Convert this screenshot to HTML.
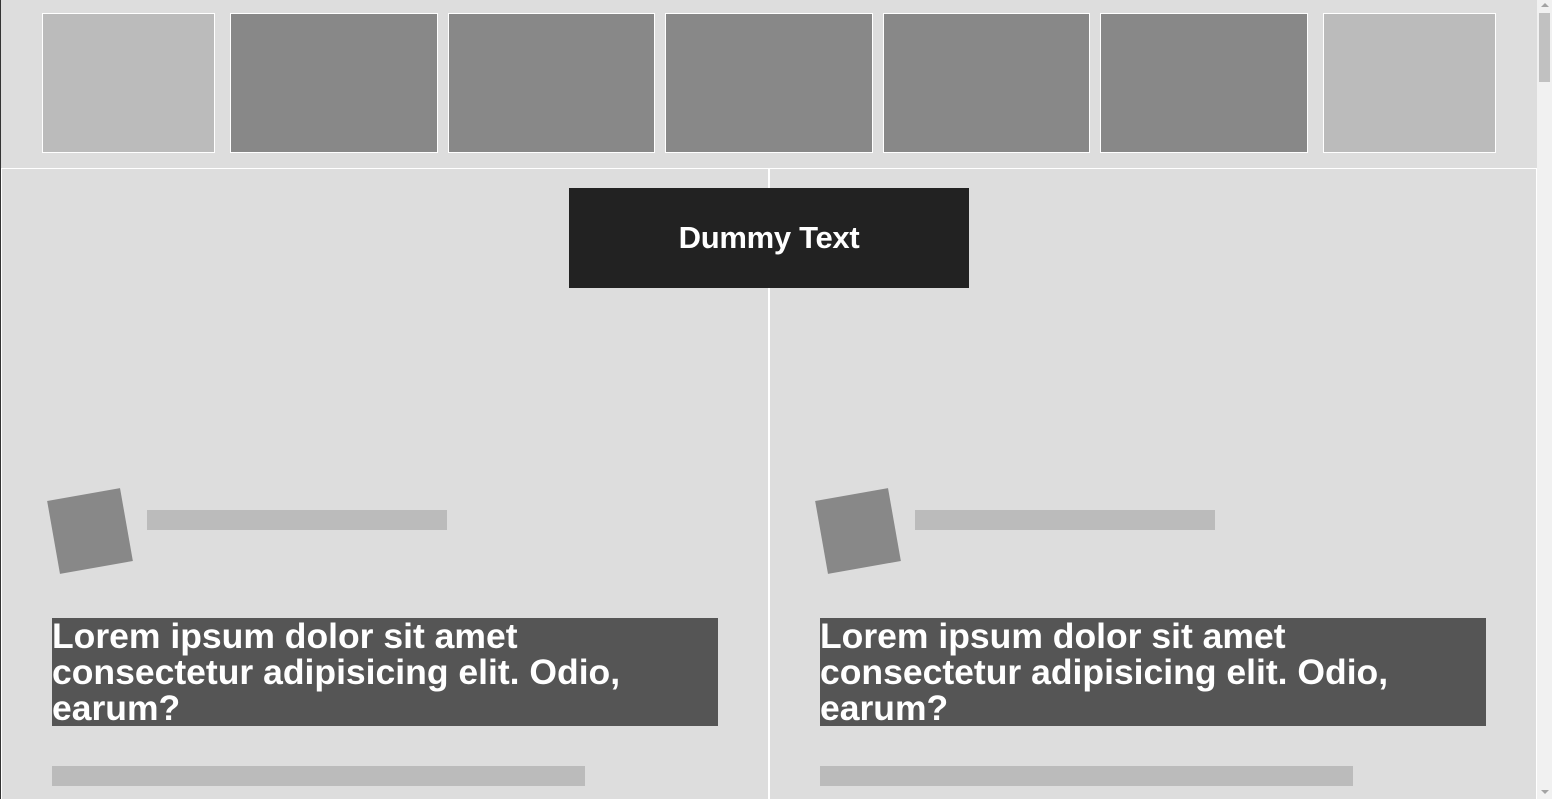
<!DOCTYPE html>
<html><head><style>
*{margin:0;padding:0;box-sizing:border-box}
body{width:1552px;height:799px;overflow:hidden;background:#ddd;position:relative;font-family:"Liberation Sans",sans-serif}
.a{position:absolute}
.t{border:1px solid #fff;top:13px;height:140px}
.l{background:#bbb}.d{background:#888}
.h{color:#fff;background:#555;font-weight:bold;font-size:35.5px;line-height:36px;width:666px;height:108px;top:618px;white-space:nowrap}
.sq{width:74px;height:74px;background:#888;transform:rotate(-10deg);top:494px}
.bar{background:#bbb;height:20px}
</style></head><body>
<div class="a" style="left:0;top:0;width:1px;height:799px;background:#333"></div>
<div class="a t l" style="left:42px;width:173px"></div>
<div class="a t d" style="left:230px;width:208px"></div>
<div class="a t d" style="left:448px;width:207px"></div>
<div class="a t d" style="left:665px;width:208px"></div>
<div class="a t d" style="left:883px;width:207px"></div>
<div class="a t d" style="left:1100px;width:208px"></div>
<div class="a t l" style="left:1323px;width:173px"></div>
<div class="a" style="left:1px;top:168px;width:1536px;background:#fff;height:1px"></div>
<div class="a" style="left:1px;top:168px;width:1px;height:631px;background:#fff"></div>
<div class="a" style="left:768px;top:168px;width:2px;height:631px;background:#fff"></div>
<div class="a" style="left:1536px;top:168px;width:1px;height:631px;background:#fff"></div>
<div class="a" style="left:569px;top:188px;width:400px;height:100px;background:#222;color:#fff;font-weight:bold;font-size:31px;text-align:center;line-height:100px;letter-spacing:-0.3px">Dummy Text</div>

<div class="a sq" style="left:53px"></div>
<div class="a bar" style="left:147px;top:510px;width:300px"></div>
<div class="a h" style="left:52px">Lorem ipsum dolor sit amet<br>consectetur adipisicing elit. Odio,<br>earum?</div>
<div class="a bar" style="left:52px;top:766px;width:533px"></div>

<div class="a sq" style="left:821px"></div>
<div class="a bar" style="left:915px;top:510px;width:300px"></div>
<div class="a h" style="left:820px">Lorem ipsum dolor sit amet<br>consectetur adipisicing elit. Odio,<br>earum?</div>
<div class="a bar" style="left:820px;top:766px;width:533px"></div>

<div class="a" style="left:1537px;top:0;width:15px;height:799px;background:#f1f1f1"></div>
<div class="a" style="left:1539px;top:13px;width:11px;height:69px;background:#c1c1c1"></div>
<div class="a" style="left:1541px;top:3px;width:0;height:0;border-left:4px solid transparent;border-right:4px solid transparent;border-bottom:4px solid #a3a3a3"></div>
<div class="a" style="left:1541px;top:790px;width:0;height:0;border-left:4px solid transparent;border-right:4px solid transparent;border-top:4px solid #a3a3a3"></div>
</body></html>
